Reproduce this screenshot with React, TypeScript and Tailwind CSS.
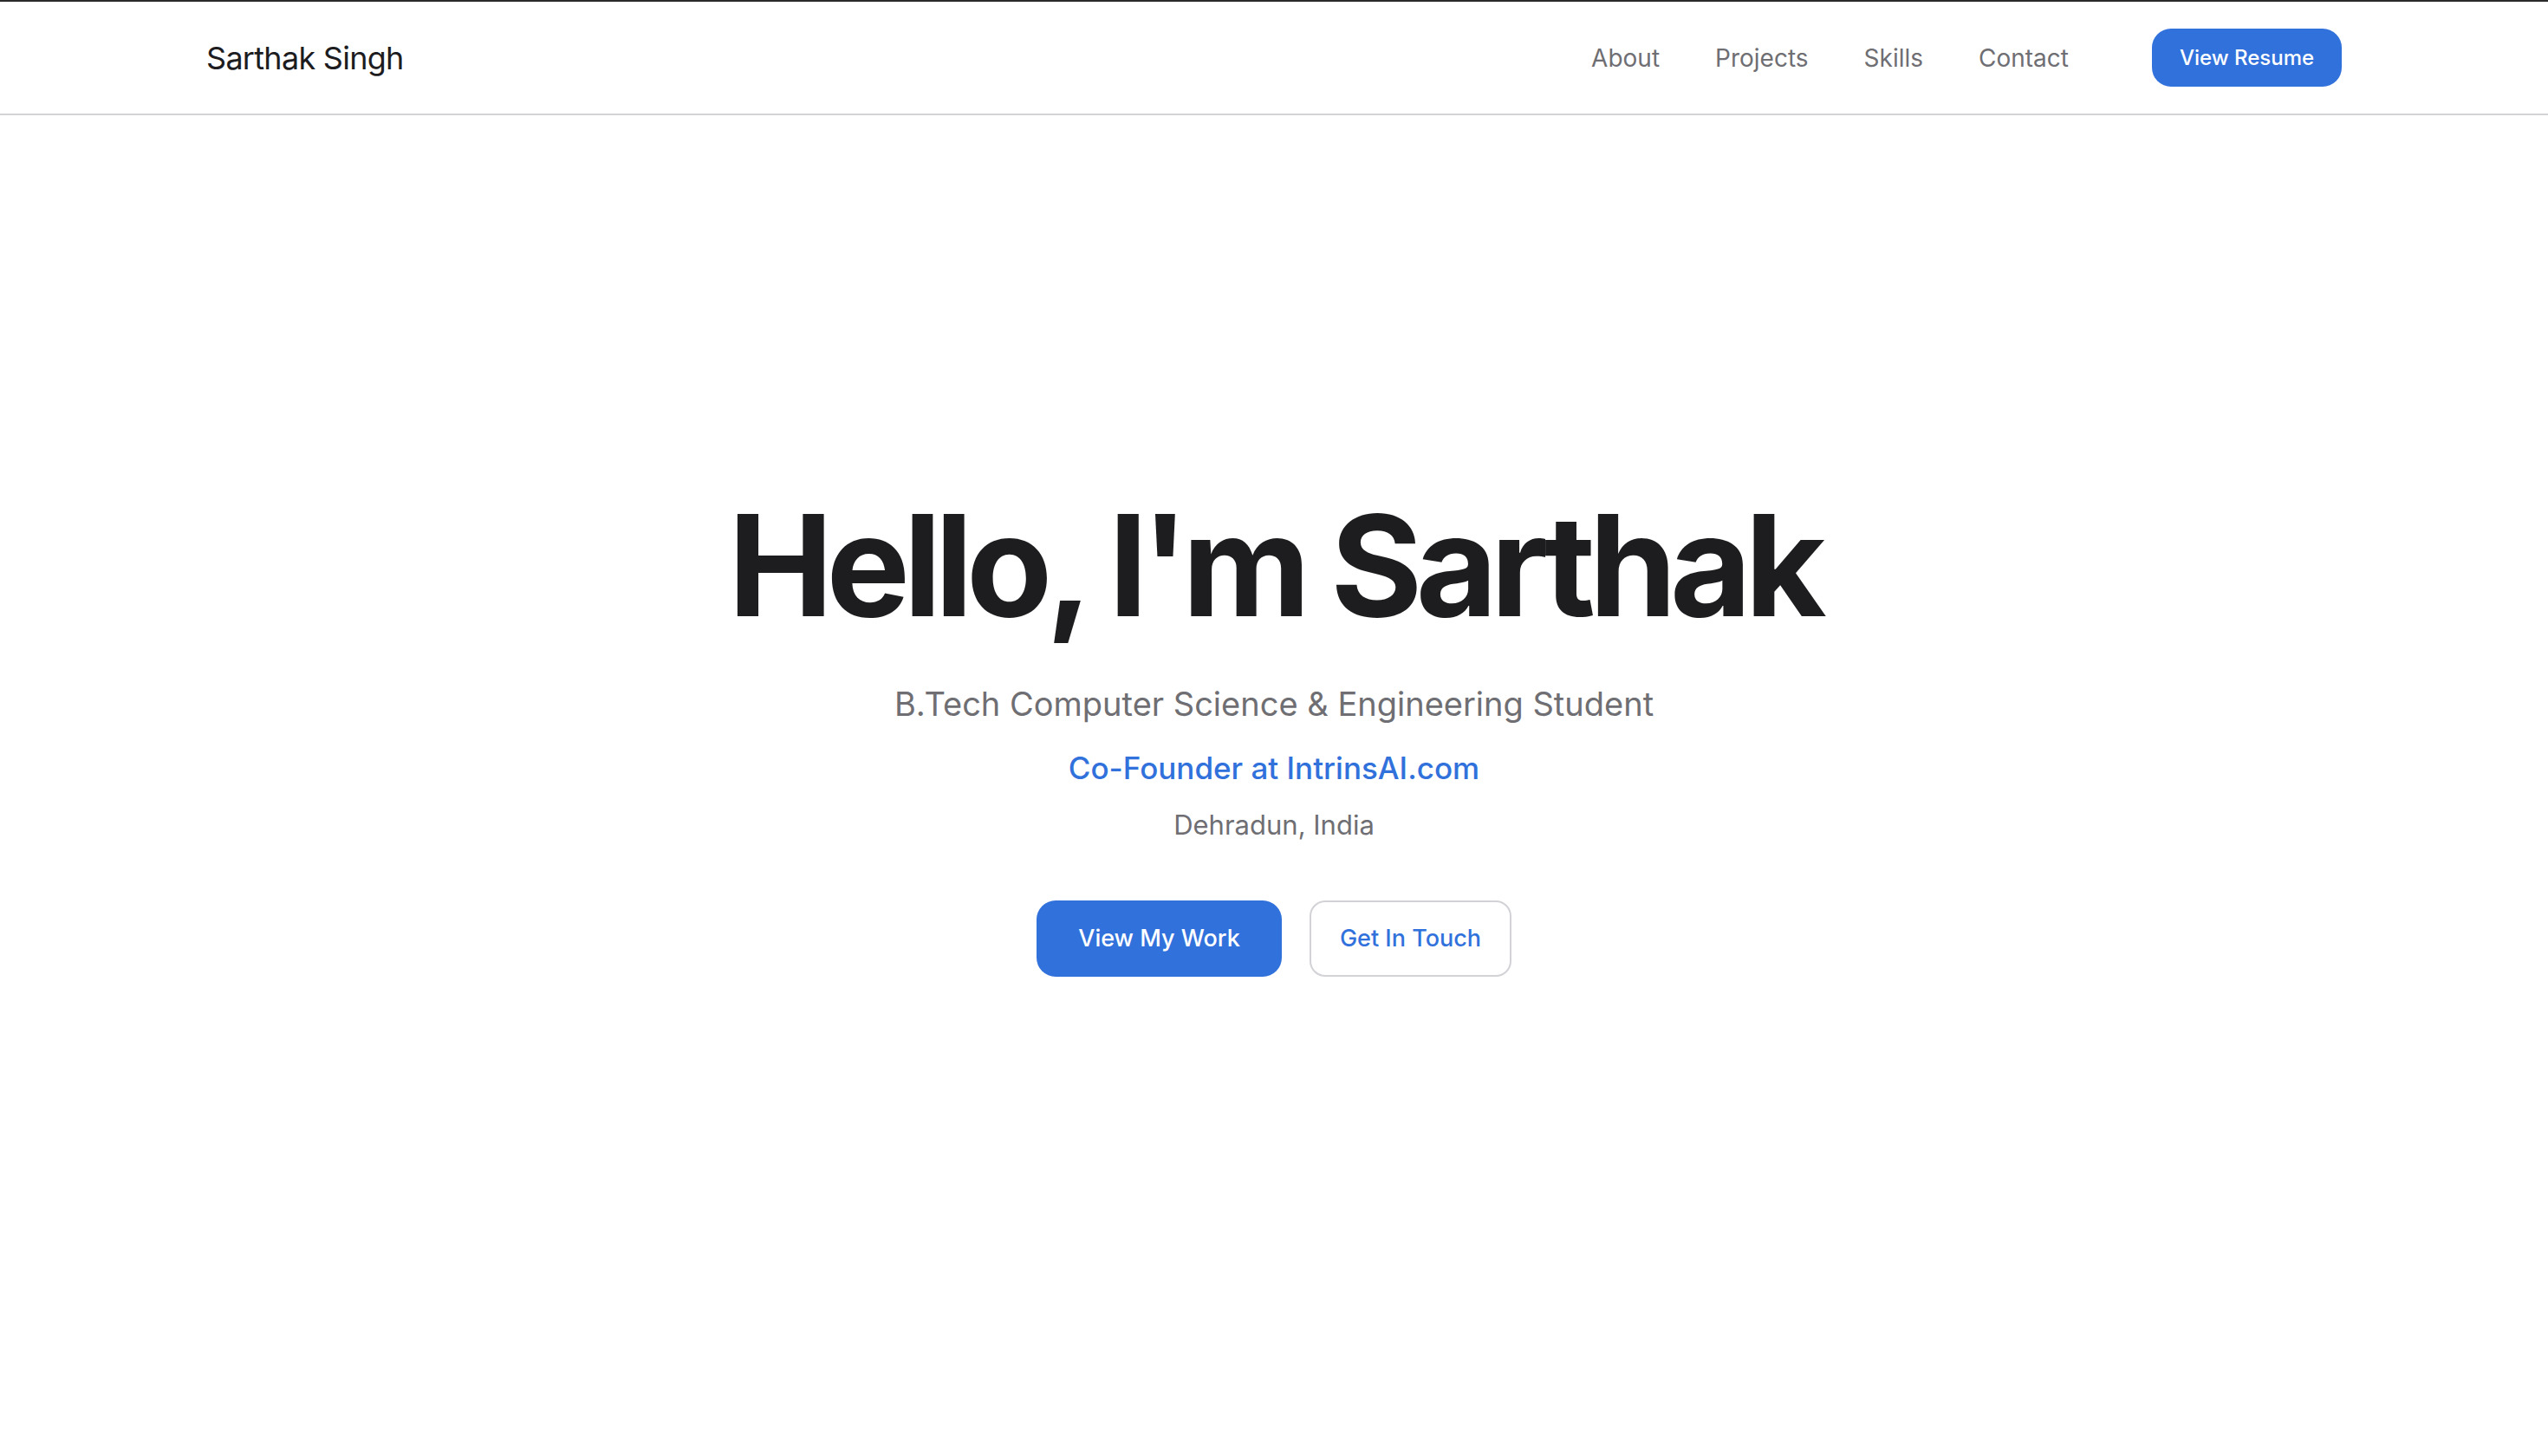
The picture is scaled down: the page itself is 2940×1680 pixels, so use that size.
export default function App() {
  const links = ['About', 'Projects', 'Skills', 'Contact']

  return (
    <div className="min-h-screen bg-white font-['Inter','Noto_Sans',sans-serif] border-t-2 border-[#2a2a2a]">
      <header className="h-[131px] border-b-2 border-[#d2d2d7] px-[238px] flex items-center justify-between">
        <a className="text-[36px] text-[#1d1d1f] tracking-[-0.02em]">Sarthak Singh</a>
        <nav className="flex items-center">
          <div className="flex items-center gap-[64px]">
            {links.map(link => (
              <a key={link} className="text-[28px] text-[#6e6e73]">
                {link}
              </a>
            ))}
          </div>
          <button className="ml-[96px] h-[67px] w-[219px] rounded-[22px] bg-[#3171dc] text-white text-[24px] font-medium">
            View Resume
          </button>
        </nav>
      </header>

      <main className="flex flex-col items-center pt-[438px] pb-[400px]">
        <h1 className="text-[162px] leading-none font-bold tracking-[-0.047em] text-[#1d1d1f]">
          Hello, I'm Sarthak
        </h1>
        <p className="mt-[57px] text-[38px] leading-[1.2] text-[#6e6e73]">
          B.Tech Computer Science &amp; Engineering Student
        </p>
        <p className="mt-[29px] text-[35px] leading-[1.2] font-medium text-[#3171dc]">
          Co-Founder at IntrinsAI.com
        </p>
        <p className="mt-[26px] text-[31px] leading-[1.2] text-[#6e6e73]">
          Dehradun, India
        </p>
        <div className="mt-[69px] flex gap-[32px]">
          <button className="h-[88px] w-[283px] rounded-[22px] bg-[#3171dc] text-white text-[27px] font-medium">
            View My Work
          </button>
          <button className="h-[88px] w-[233px] rounded-[18px] border-2 border-[#d2d2d7] bg-white text-[#3171dc] text-[27px] font-medium">
            Get In Touch
          </button>
        </div>
      </main>
    </div>
  )
}
